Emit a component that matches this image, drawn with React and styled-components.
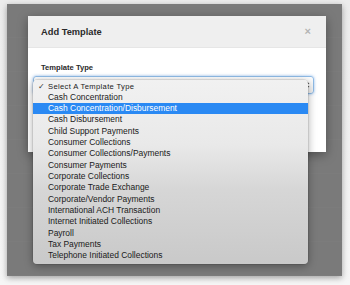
import React from "react";
import styled, { createGlobalStyle } from "styled-components";

const GlobalStyle = createGlobalStyle`
  html, body { margin: 0; padding: 0; }
  body {
    background: #f2f2f2;
    font-family: "Liberation Sans", Arial, sans-serif;
  }
`;

const Screen = styled.div`
  width: 350px;
  height: 285px;
  box-sizing: border-box;
  padding: 4px 8px 9px 7px;
  background: linear-gradient(#ececec, #f6f6f6);
`;

const Backdrop = styled.div`
  position: relative;
  box-sizing: border-box;
  width: 335px;
  height: 272px;
  padding: 12px 16px 0 21px;
  background: repeating-linear-gradient(
    #7a7a7a 0px,
    #7a7a7a 33px,
    #7c7c7c 33px,
    #7c7c7c 34px
  );
  box-shadow: 0 2px 6px rgba(0, 0, 0, 0.35);
`;

const Modal = styled.div`
  width: 298px;
  background: #fff;
  box-shadow: 0 3px 10px rgba(0, 0, 0, 0.35);
`;

const Header = styled.div`
  height: 32px;
  box-sizing: border-box;
  display: flex;
  align-items: center;
  justify-content: space-between;
  padding: 0 15px 0 13px;
  background: #efefef;
  border-bottom: 1px solid #e6e6e6;
`;

const Title = styled.div`
  font-size: 9.3px;
  font-weight: bold;
  color: #2a2a2a;
`;

const Close = styled.div`
  font-size: 11px;
  font-weight: bold;
  color: #b4b4b4;
  line-height: 1;
`;

const Body = styled.div`
  box-sizing: border-box;
  height: 104px;
  padding: 15px 12px 0 5px;
`;

const Label = styled.div`
  margin-left: 8px;
  font-size: 7.6px;
  line-height: 10px;
  font-weight: bold;
  color: #2a2a2a;
`;

const SelectWrap = styled.div`
  position: relative;
  margin-top: 3px;
`;

const SelectBox = styled.div`
  box-sizing: border-box;
  height: 18px;
  border: 1px solid #8fbbe6;
  border-radius: 3px;
  background: linear-gradient(#fdfdfd, #f1f1f1);
  box-shadow: 0 0 3px rgba(100, 160, 230, 0.7);
  display: flex;
  align-items: center;
  justify-content: flex-end;
  padding-right: 3px;
`;

const Menu = styled.div`
  position: absolute;
  top: 4px;
  left: 0;
  width: 275px;
  box-sizing: border-box;
  padding: 0.5px 0 2px;
  border-radius: 4px;
  background: linear-gradient(#f1f1f1 0%, #e9e9e9 35%, #d6d6d6 60%, #c9c9c9 100%);
  box-shadow: 0 2px 8px rgba(0, 0, 0, 0.35), 0 0 0 0.5px rgba(0, 0, 0, 0.15);
  z-index: 2;
`;

const Item = styled.div`
  position: relative;
  height: 11.33px;
  line-height: 11.33px;
  padding-left: 15px;
  font-size: ${(p) => (p.$header ? "7.6px" : "8.45px")};
  letter-spacing: ${(p) => (p.$header ? "0.35px" : "0")};
  color: ${(p) => (p.$active ? "#fff" : "#1a1a1a")};
  background: ${(p) => (p.$active ? "#2a89f3" : "transparent")};
  white-space: nowrap;
`;

const Check = styled.span`
  position: absolute;
  left: 5px;
  top: 0;
  font-size: 7.5px;
  color: #333;
  letter-spacing: 0;
`;

const items = [
  "Cash Concentration",
  "Cash Concentration/Disbursement",
  "Cash Disbursement",
  "Child Support Payments",
  "Consumer Collections",
  "Consumer Collections/Payments",
  "Consumer Payments",
  "Corporate Collections",
  "Corporate Trade Exchange",
  "Corporate/Vendor Payments",
  "International ACH Transaction",
  "Internet Initiated Collections",
  "Payroll",
  "Tax Payments",
  "Telephone Initiated Collections",
];

function Stepper() {
  return (
    <svg width="5" height="8" viewBox="0 0 5 8">
      <path d="M0.5 3 L2.5 0.8 L4.5 3 Z" fill="#555" />
      <path d="M0.5 5 L2.5 7.2 L4.5 5 Z" fill="#555" />
    </svg>
  );
}

export default function App() {
  return (
    <>
      <GlobalStyle />
      <Screen>
        <Backdrop>
          <Modal>
            <Header>
              <Title>Add Template</Title>
              <Close>×</Close>
            </Header>
            <Body>
              <Label>Template Type</Label>
              <SelectWrap>
                <SelectBox>
                  <Stepper />
                </SelectBox>
                <Menu>
                  <Item $header>
                    <Check>✓</Check>
                    Select A Template Type
                  </Item>
                  {items.map((t, i) => (
                    <Item key={t} $active={i === 1}>
                      {t}
                    </Item>
                  ))}
                </Menu>
              </SelectWrap>
            </Body>
          </Modal>
        </Backdrop>
      </Screen>
    </>
  );
}
